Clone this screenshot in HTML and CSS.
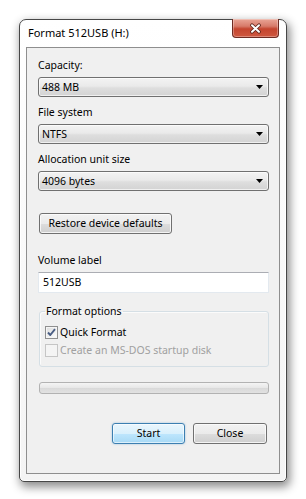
FILE: index.html
```html
<!DOCTYPE html>
<html lang="en">
<head>
<meta charset="utf-8">
<title>Format 512USB (H:)</title>
<link rel="stylesheet" href="styles.css">
</head>
<body>
<div class="window">
  <div class="titlebar">
    <span class="title">Format 512USB (H:)</span>
    <div class="close">
      <svg class="close-x" width="13" height="11" viewBox="0 0 13 11">
        <path d="M3 2.2 L10 8.8 M10 2.2 L3 8.8" stroke="#5a2218" stroke-width="3.6" stroke-linecap="round" fill="none"/>
        <path d="M3 2.2 L10 8.8 M10 2.2 L3 8.8" stroke="#ffffff" stroke-width="2" stroke-linecap="round" fill="none"/>
      </svg>
    </div>
  </div>
  <div class="panel">
    <div class="field">
      <span class="label">Capacity:</span>
      <div class="combo"><span>488 MB</span><svg class="arrow" width="7" height="4" viewBox="0 0 7 4"><polygon points="0,0 7,0 3.5,4" fill="#000"/></svg></div>
    </div>
    <div class="field">
      <span class="label">File system</span>
      <div class="combo"><span>NTFS</span><svg class="arrow" width="7" height="4" viewBox="0 0 7 4"><polygon points="0,0 7,0 3.5,4" fill="#000"/></svg></div>
    </div>
    <div class="field">
      <span class="label">Allocation unit size</span>
      <div class="combo"><span>4096 bytes</span><svg class="arrow" width="7" height="4" viewBox="0 0 7 4"><polygon points="0,0 7,0 3.5,4" fill="#000"/></svg></div>
    </div>
    <button class="btn restore">Restore device defaults</button>
    <div class="field volume">
      <span class="label">Volume label</span>
      <div class="textbox">512USB</div>
    </div>
    <fieldset class="group">
      <legend class="legend">Format options</legend>
      <div class="check-row">
        <span class="cb">
          <svg width="11" height="11" viewBox="0 0 11 11"><path d="M2 5.5 L4.3 8 L9 2.2" stroke="#4a5e84" stroke-width="1.9" fill="none" stroke-linejoin="round"/></svg>
        </span>
        <span>Quick Format</span>
      </div>
      <div class="check-row disabled">
        <span class="cb"></span>
        <span>Create an MS-DOS startup disk</span>
      </div>
    </fieldset>
    <div class="progress"></div>
    <div class="actions">
      <button class="btn start">Start</button>
      <button class="btn closebtn">Close</button>
    </div>
  </div>
</div>
</body>
</html>
```

FILE: styles.css
```css
* { box-sizing: border-box; }
html, body { margin: 0; padding: 0; }
body {
  background: #ffffff;
  width: 306px;
  height: 499px;
  overflow: hidden;
  font-family: "Noto Sans", "Open Sans", sans-serif;
  font-size: 10.5px;
  color: #000;
}
.window {
  margin: 19px 0 0 19px;
  width: 268px;
  height: 463px;
  border: 1px solid #474747;
  border-radius: 7px 7px 5px 5px;
  background: linear-gradient(#ffffff, #f4f4f4);
  box-shadow: inset 0 0 0 1px rgba(255,255,255,0.9), 2px 4px 10px 1px rgba(0,0,0,0.45);
  padding: 0 6px 7px 6px;
  display: flex;
  flex-direction: column;
}
.titlebar {
  height: 27px;
  display: flex;
  justify-content: space-between;
  align-items: flex-start;
}
.title {
  font-size: 11px;
  line-height: 15px;
  padding: 5px 0 0 2px;
  color: #000;
}
.close {
  width: 47px;
  height: 19px;
  margin: -1px 1px 0 0;
  border: 1px solid #6e2b22;
  border-top: none;
  border-radius: 0 0 4px 4px;
  background: linear-gradient(#e9a596, #d77b6a 40%, #c4452f 55%, #cf5840 100%);
  box-shadow: inset 0 0 0 1px rgba(255,255,255,0.3);
  display: flex;
  align-items: center;
  justify-content: center;
}
.panel {
  flex: 1;
  background: #f0f0f0;
  border: 1px solid #8e8e8e;
  padding: 10px 10px 0 11px;
  display: flex;
  flex-direction: column;
}
.field {
  display: flex;
  flex-direction: column;
  gap: 4px;
}
.field + .field { margin-top: 8px; }
.label { line-height: 15px; }
.combo {
  height: 20px;
  border: 1px solid #707070;
  border-radius: 3px;
  background: linear-gradient(#f3f3f3, #eaeaea 45%, #dedede 55%, #d3d3d3);
  box-shadow: inset 0 0 0 1px rgba(255,255,255,0.65);
  display: flex;
  align-items: center;
  justify-content: space-between;
  padding: 0 5px 0 3px;
  line-height: 18px;
}
.arrow { display: block; }
.btn {
  font: inherit;
  color: #000;
  height: 21px;
  padding: 0;
  line-height: 19px;
  border: 1px solid #707070;
  border-radius: 3px;
  background: linear-gradient(#f2f2f2, #ebebeb 50%, #dddddd 51%, #cfcfcf);
  box-shadow: inset 0 0 0 1px rgba(252,252,252,0.8);
  text-align: center;
}
.restore {
  margin: 22px 0 0 1px;
  width: 133px;
  align-self: flex-start;
}
.field.volume { margin-top: 19px; }
.textbox {
  height: 21px;
  background: #fff;
  border: 1px solid #e3e9ef;
  border-top-color: #abadb3;
  padding: 0 4px;
  line-height: 19px;
}
.group {
  margin: 11px 0 0 1px;
  padding: 8px 0 9px 5px;
  border: 1px solid #d5dfe5;
  border-radius: 3px;
  min-width: 0;
  box-shadow: inset 1px 1px 0 #fbfbfb;
}
.legend {
  padding: 0 1px;
  line-height: 14px;
}
.check-row {
  display: flex;
  align-items: center;
  gap: 2px;
  height: 13px;
  line-height: 13px;
  white-space: nowrap;
}
.check-row + .check-row { margin-top: 5px; }
.cb {
  width: 13px;
  height: 13px;
  flex: none;
  border: 1px solid #8f8f8f;
  background: linear-gradient(135deg, #dcdcdc, #fdfdfd);
  box-shadow: inset 0 0 0 1px #f5f5f5;
  display: flex;
  align-items: center;
  justify-content: center;
}
.cb svg { display: block; }
.check-row.disabled { color: #a0a0a0; }
.check-row.disabled .cb {
  border-color: #c5c5c5;
  background: #f4f4f4;
  box-shadow: none;
}
.progress {
  margin: 15px 0 0 1px;
  height: 12px;
  border: 1px solid #b2b2b2;
  border-radius: 3px;
  background: linear-gradient(#f4f4f4, #e7e7e7 50%, #d9d9d9 51%, #e2e2e2);
}
.actions {
  margin-top: 29px;
  display: flex;
  justify-content: flex-end;
  gap: 8px;
  padding-right: 2px;
}
.start {
  width: 73px;
  border-color: #3c7fb1;
  background: linear-gradient(#eaf6fd, #d9f0fc 50%, #bee6fd 51%, #a7d9f5);
  box-shadow: inset 0 0 0 1px rgba(255,255,255,0.6), 0 0 2px rgba(60,140,200,0.5);
}
.closebtn { width: 74px; }
```
